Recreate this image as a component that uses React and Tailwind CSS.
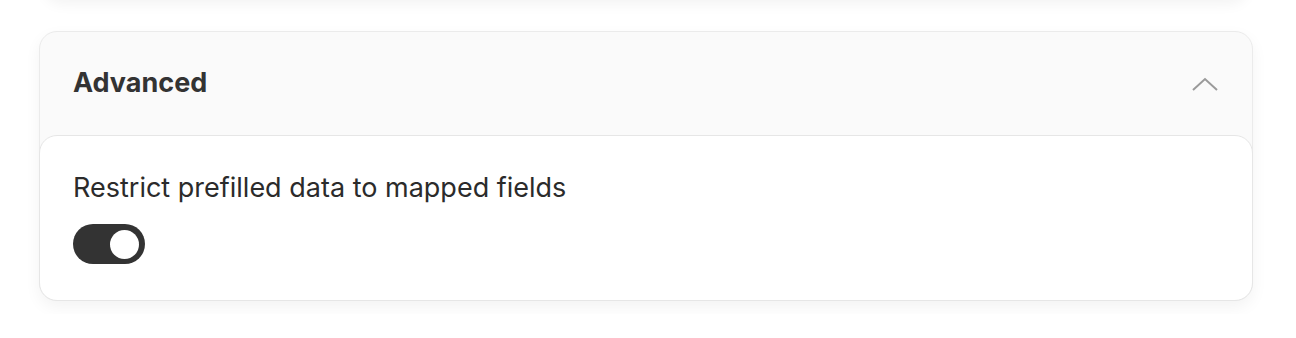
import { useState } from "react";

function Toggle({ on, onChange }) {
  return (
    <button
      type="button"
      onClick={() => onChange(!on)}
      className={`flex h-[40px] w-[72px] items-center rounded-full p-[6px] ${on ? "justify-end bg-[#333333]" : "justify-start bg-[#d4d4d4]"}`}
    >
      <span className="block h-[29px] w-[29px] rounded-full bg-white" />
    </button>
  );
}

export default function App() {
  const [open, setOpen] = useState(true);
  const [restrict, setRestrict] = useState(true);

  return (
    <div className="min-h-screen bg-white font-['Inter',sans-serif] text-[#2b2b2b]">
      {/* bottom edge of the card above */}
      <div className="ml-[44px] mr-[48px] -mt-[24px] h-[24px] rounded-b-[18px] bg-white shadow-[0_4px_14px_rgba(0,0,0,0.05)]" />

      <div className="ml-[39px] mr-[43px] mt-[31px] rounded-[18px] border border-[#ebebeb] bg-[#fafafa] shadow-[0_6px_16px_rgba(0,0,0,0.05)]">
        <div className="flex h-[103px] items-center justify-between pl-[33px] pr-[34px]">
          <h2 className="text-[27px] font-bold text-[#333333]">Advanced</h2>
          <button type="button" onClick={() => setOpen(!open)} className="text-[#9a9a9a]">
            <svg width="26" height="14" viewBox="0 0 26 14" fill="none">
              <path d={open ? "M1 13L13 2L25 13" : "M1 1L13 12L25 1"} stroke="currentColor" strokeWidth="2" />
            </svg>
          </button>
        </div>

        {open && (
          <div className="-mx-px -mb-px rounded-[18px] border border-[#e6e6e6] bg-white px-[33px] pb-[36px] pt-[34px]">
            <p className="text-[27px] leading-[36px]">Restrict prefilled data to mapped fields</p>
            <div className="mt-[18px]">
              <Toggle on={restrict} onChange={setRestrict} />
            </div>
          </div>
        )}
      </div>
    </div>
  );
}
